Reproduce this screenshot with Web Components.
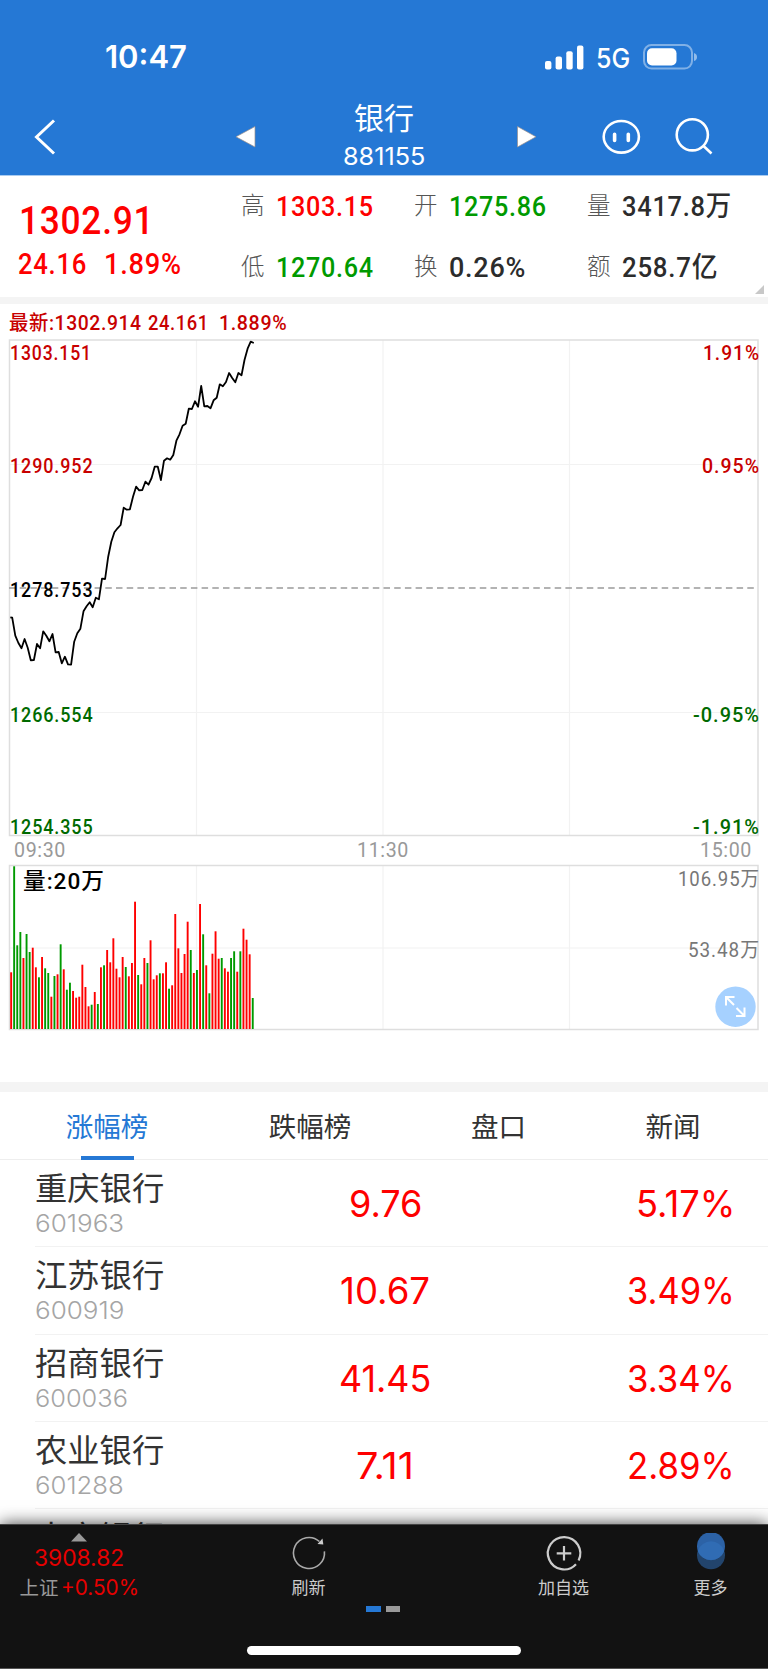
<!DOCTYPE html>
<html lang="zh-CN">
<head>
<meta charset="utf-8">
<meta name="viewport" content="width=device-width, initial-scale=1">
<title>银行 881155</title>
<style>
    body {
        margin: 0;
        background: #fff;
        font-family: Inter, "Noto Sans CJK SC", sans-serif;
        --brand: #2578d5;
        --up: #fe0000;
        --down: #009a00;
        --din: Roboto, "Noto Sans CJK SC", sans-serif;
    }
</style>
</head>
<body>
<stock-page></stock-page>

<script>
// Text squeezed or stretched to a fixed width
class FitText extends HTMLElement {
    constructor() {
        super();
        this.attachShadow({ mode: 'open' });
        this.shadowRoot.innerHTML = `
        <style>
        :host { display: block; white-space: nowrap; flex: none; }
        span { display: inline-block; transform-origin: 0 50%; }
        </style>
        <span><slot></slot></span>
        `;
    }

    connectedCallback() {
        const width = Number(this.getAttribute('width'));
        const span = this.shadowRoot.querySelector('span');
        this.style.width = width + 'px';
        span.style.transform = `scaleX(${width / span.offsetWidth})`;
    }
}
customElements.define('fit-text', FitText);

class StatusBar extends HTMLElement {
    constructor() {
        super();
        this.attachShadow({ mode: 'open' });
        this.shadowRoot.innerHTML = `
        <style>
        :host {
            display: flex;
            align-items: center;
            box-sizing: border-box;
            height: 98px;
            padding: 16px 71px 0 105px;
            background: var(--brand);
            color: #fff;
            line-height: 40px;
        }
        .time { font-size: 31px; font-weight: 600; margin-right: auto; }
        .net { font-size: 26.5px; font-weight: 500; margin: 2px 13px 0 12px; }
        svg { display: block; }
        </style>
        <fit-text class="time" width="82">10:47</fit-text>
        <svg width="39" height="25" fill="#fff">
            <rect x="0" y="16" width="6.4" height="8.6" rx="2"/>
            <rect x="10.6" y="11.5" width="6.4" height="13.1" rx="2"/>
            <rect x="21.3" y="6.3" width="6.4" height="18.3" rx="2"/>
            <rect x="32" y="0.5" width="6.4" height="24.1" rx="2"/>
        </svg>
        <fit-text class="net" width="34">5G</fit-text>
        <svg width="54" height="26" fill="none">
            <rect x="1" y="1" width="48" height="23.6" rx="7.5" stroke="#fff" stroke-opacity=".42" stroke-width="2"/>
            <rect x="4" y="4.2" width="29.5" height="17.2" rx="5" fill="#fff"/>
            <path d="M51 9 Q54 10 54 13 T51 17 Z" fill="#fff" fill-opacity=".5"/>
        </svg>
        `;
    }
}
customElements.define('status-bar', StatusBar);

class NavBar extends HTMLElement {
    constructor() {
        super();
        this.attachShadow({ mode: 'open' });
        this.shadowRoot.innerHTML = `
        <style>
        :host {
            display: grid;
            grid-template-columns: 234px 109px 172px 86px 73px 1fr;
            align-items: center;
            box-sizing: border-box;
            height: 78px;
            border-bottom: 1px solid #a9cbf0;
            background: var(--brand);
            color: #fff;
        }
        svg { display: block; fill: none; stroke: #fff; }
        .back { margin-left: 33px; }
        .tri { fill: #fff; stroke: #9a8f8c; stroke-width: .7; }
        .title { width: 82px; text-align: center; }
        .name { font-size: 30px; line-height: 40px; }
        .code { font-size: 24px; line-height: 37px; margin-left: -1.5px; }
        </style>
        <svg class="back" width="26" height="38" stroke-width="3"><path d="M21 2.500 L3.500 19 L21 35.500"/></svg>
        <svg class="tri" width="24" height="24"><path d="M21 1.500 V22 L2 11.800 Z"/></svg>
        <div class="title">
            <div class="name"><slot name="name"></slot></div>
            <fit-text class="code" width="82"><slot name="code"></slot></fit-text>
        </div>
        <svg class="tri" width="24" height="24"><path d="M2.500 1.500 V22 L21 11.800 Z"/></svg>
        <svg width="40" height="38" stroke-width="2.600">
            <ellipse cx="20.300" cy="18.800" rx="17.600" ry="15.800"/>
            <path d="M13.600 16.300 V22.500 M27.300 16.300 V22.500" stroke-width="3.600" stroke-linecap="round"/>
        </svg>
        <svg width="42" height="40" stroke-width="2.600">
            <circle cx="18.300" cy="17.800" r="15.600"/>
            <path d="M29 28.500 L37.500 36.500"/>
        </svg>
        `;
    }
}
customElements.define('nav-bar', NavBar);

class QuoteSummary extends HTMLElement {
    constructor() {
        super();
        this.attachShadow({ mode: 'open' });
        this.shadowRoot.innerHTML = `
        <style>
        :host {
            display: grid;
            grid-template-columns: 241px 1fr;
            position: relative;
            height: 121px;
            font-family: var(--din);
            font-weight: 500;
            letter-spacing: .05em;
        }
        .last { padding: 22px 0 0 19px; color: var(--up); }
        .price { font-size: 39.5px; line-height: 45px; }
        .diff { display: flex; gap: 17px; margin-left: -1px; font-size: 29px; line-height: 43px; }
        .grid { display: grid; grid-template-columns: repeat(3, 173px); grid-auto-rows: 61px; }
        .cell { display: flex; gap: 11.5px; font-size: 28px; line-height: 61px; color: #2c2c2c; }
        .cell i { font-style: normal; font-weight: 300; font-size: 23.5px; letter-spacing: 0; color: #555; }
        .up { color: var(--up); }
        .down { color: var(--down); }
        .corner { position: absolute; right: 4px; bottom: 3px; }
        </style>
        <div class="last">
            <fit-text class="price" width="135">1302.91</fit-text>
            <div class="diff"><fit-text width="69">24.16</fit-text><fit-text width="78">1.89%</fit-text></div>
        </div>
        <div class="grid">
            <div class="cell"><i>高</i><fit-text class="up" width="98">1303.15</fit-text></div>
            <div class="cell"><i>开</i><fit-text class="down" width="98">1275.86</fit-text></div>
            <div class="cell"><i>量</i><fit-text width="110">3417.8万</fit-text></div>
            <div class="cell"><i>低</i><fit-text class="down" width="98">1270.64</fit-text></div>
            <div class="cell"><i>换</i><fit-text width="77">0.26%</fit-text></div>
            <div class="cell"><i>额</i><fit-text width="96">258.7亿</fit-text></div>
        </div>
        <svg class="corner" width="9" height="9"><path d="M9 0 V9 H0 Z" fill="#c8c8c8"/></svg>
        `;
    }
}
customElements.define('quote-summary', QuoteSummary);

// Intraday price line, one point per minute
const PRICE_LEFT = 12.2;
const PRICE_STEP = 3.098;
const prices = [
    617.7, 635.7, 643, 648.3, 639, 647.7, 660.3, 660, 644, 648.3, 631.3, 635.7, 641.3, 634, 652.3, 652,
    663.3, 656.7, 664.3, 664.7, 641.7, 633.3, 628.7, 611.3, 606.3, 602.3, 607.3, 597.7, 599.3, 578.7, 579,
    556.7, 541.7, 532.3, 528.3, 525, 507.7, 509.7, 509.3, 496.7, 486.7, 490.3, 490, 481.7, 484.7, 478, 466.7,
    466.7, 480, 460.7, 458.3, 459.7, 455, 440.7, 434.3, 425.7, 423.7, 408.7, 409, 401.3, 406.7, 386, 406.3,
    406, 408.3, 400.3, 397.7, 384.3, 386.3, 382, 373, 378, 382.3, 373, 375.3, 360, 348.7, 341.7, 343
];

class PriceChart extends HTMLElement {
    constructor() {
        super();
        this.attachShadow({ mode: 'open' });
        const points = prices.map((y, i) => `${(PRICE_LEFT + i * PRICE_STEP).toFixed(1)},${y}`).join(' ');
        this.shadowRoot.innerHTML = `
        <style>
        :host { display: block; height: 500px; }
        svg { display: block; }
        text { font: 500 20px var(--din); letter-spacing: 1px; }
        .right text { text-anchor: end; }
        .up { fill: #c80000; }
        .down { fill: #006a00; }
        </style>
        <svg width="768" height="500" viewBox="0 338 768 500">
            <path d="M10 464.500 H758 M10 712.500 H758 M196.500 340 V835 M383 340 V835 M569.500 340 V835" stroke="#f2f2f2" stroke-width="1.200"/>
            <rect x="9.500" y="340" width="748.500" height="495.500" fill="none" stroke="#dedede" stroke-width="1.500"/>
            <path d="M9 588 H758" stroke="#9a9a9a" stroke-width="1.700" stroke-dasharray="6.500 4.200"/>
            <polyline points="10.3,617.3 ${points}" fill="none" stroke="#000" stroke-width="1.800" stroke-linejoin="round"/>
            <text class="up" x="10" y="360" textLength="82" lengthAdjust="spacingAndGlyphs">1303.151</text>
            <text class="up" x="10" y="473" textLength="83.500" lengthAdjust="spacingAndGlyphs">1290.952</text>
            <text x="10" y="597" textLength="83.500" lengthAdjust="spacingAndGlyphs">1278.753</text>
            <text class="down" x="10" y="721.500" textLength="83.500" lengthAdjust="spacingAndGlyphs">1266.554</text>
            <text class="down" x="10" y="833.500" textLength="83.500" lengthAdjust="spacingAndGlyphs">1254.355</text>
            <g class="right">
                <text class="up" x="760" y="360" textLength="57" lengthAdjust="spacingAndGlyphs">1.91%</text>
                <text class="up" x="760" y="473" textLength="58" lengthAdjust="spacingAndGlyphs">0.95%</text>
                <text class="down" x="760" y="721.500" textLength="67" lengthAdjust="spacingAndGlyphs">-0.95%</text>
                <text class="down" x="760" y="833.500" textLength="67" lengthAdjust="spacingAndGlyphs">-1.91%</text>
            </g>
        </svg>
        `;
    }
}
customElements.define('price-chart', PriceChart);

// Bar heights in thirds of a pixel, one bar per minute
const volumes = [
    170, 488, 251, 291, 213, 285, 231, 244, 185, 155, 216, 182, 168, 97, 159, 164, 254, 179, 118, 139,
    114, 94, 97, 193, 126, 68, 73, 111, 75, 185, 191, 237, 200, 272, 181, 155, 216, 186, 158, 198,
    382, 162, 134, 213, 198, 266, 149, 161, 167, 167, 200, 121, 131, 345, 242, 168, 225, 322, 237, 168,
    177, 375, 284, 191, 107, 226, 293, 211, 213, 182, 172, 213, 233, 172, 233, 301, 268, 224, 93
];
// r: price rose in that minute, g: price fell
const volumeColors = 'rgggrggrrgrggrgrgrggrrrrrrgrgrgrrrrrrgrrrgrrgrrrgrrgrrrrrrgrgrgrgrrrgrrggrgrrrg';

class VolumeChart extends HTMLElement {
    constructor() {
        super();
        this.attachShadow({ mode: 'open' });
        const bars = volumes.map((v, i) => {
            const x = (11.1 + i * 3.098 - 0.95).toFixed(1);
            const h = v / 3;
            return `<rect x="${x}" y="${(1029 - h).toFixed(1)}" width="1.9" height="${h.toFixed(1)}" fill="${volumeColors[i] === 'g' ? '#009a00' : '#fe0000'}"/>`;
        }).join('');
        this.shadowRoot.innerHTML = `
        <style>
        :host { display: block; position: relative; height: 220px; }
        svg { display: block; }
        text { font: 400 20px var(--din); letter-spacing: 1px; fill: #777; }
        .total { font-size: 22.5px; font-weight: 500; fill: #000; }
        .expand { position: absolute; left: 715px; top: 124px; }
        </style>
        <svg width="768" height="170" viewBox="0 862 768 170">
            <path d="M10 948 H758 M196.500 866 V1029 M383 866 V1029 M569.500 866 V1029" stroke="#f2f2f2" stroke-width="1.200"/>
            <rect x="9.500" y="865.500" width="748.500" height="164" fill="none" stroke="#dedede" stroke-width="1.500"/>
            ${bars}
            <text class="total" x="23" y="889" textLength="82" lengthAdjust="spacingAndGlyphs">量:20万</text>
            <text x="760" y="886" text-anchor="end" textLength="82" lengthAdjust="spacingAndGlyphs">106.95万</text>
            <text x="760" y="956.500" text-anchor="end" textLength="72" lengthAdjust="spacingAndGlyphs">53.48万</text>
        </svg>
        <svg class="expand" width="41" height="41" fill="none" stroke="#fff" stroke-width="2">
            <circle cx="20.500" cy="20.700" r="20.200" fill="#a6d1ff" stroke="none"/>
            <path d="M11 19.500 V11 H19.500 M11 11 L19 19 M29.500 21.500 V30 H21 M29.500 30 L21.500 22"/>
        </svg>
        `;
    }
}
customElements.define('volume-chart', VolumeChart);

class ChartPanel extends HTMLElement {
    constructor() {
        super();
        this.attachShadow({ mode: 'open' });
        this.shadowRoot.innerHTML = `
        <style>
        :host { display: block; border-top: 7px solid #f4f4f4; font-family: var(--din); letter-spacing: .04em; }
        .info {
            display: flex;
            height: 34px;
            padding-left: 9px;
            font-size: 20.5px;
            font-weight: 500;
            line-height: 39px;
            color: #c80000;
        }
        .info fit-text + fit-text { margin-left: 6px; }
        .axis {
            display: flex;
            justify-content: space-between;
            height: 24px;
            padding: 0 16px 0 14px;
            font-size: 20px;
            line-height: 25.5px;
            color: #999;
        }
        </style>
        <div class="info">
            <fit-text width="133">最新:1302.914</fit-text>
            <fit-text width="61">24.161</fit-text>
            <fit-text width="68" style="margin-left: 10px">1.889%</fit-text>
        </div>
        <price-chart></price-chart>
        <div class="axis">
            <fit-text width="52">09:30</fit-text>
            <fit-text width="52">11:30</fit-text>
            <fit-text width="52">15:00</fit-text>
        </div>
        <volume-chart></volume-chart>
        `;
    }
}
customElements.define('chart-panel', ChartPanel);

class RankTabs extends HTMLElement {
    constructor() {
        super();
        this.attachShadow({ mode: 'open' });
        this.shadowRoot.innerHTML = `
        <style>
        :host {
            display: grid;
            grid-template-columns: 214px 192px 185px 164px;
            box-sizing: border-box;
            height: 78px;
            border-top: 10px solid #f4f4f4;
            border-bottom: 1px solid #eee;
            font-size: 27.5px;
            line-height: 70px;
            color: #333;
        }
        div { display: flex; flex-direction: column; align-items: center; }
        .active { color: var(--brand); }
        .active::after {
            content: "";
            width: 53px;
            height: 4px;
            margin-top: -6px;
            background: var(--brand);
        }
        </style>
        <div class="active">涨幅榜</div>
        <div>跌幅榜</div>
        <div>盘口</div>
        <div>新闻</div>
        `;
    }
}
customElements.define('rank-tabs', RankTabs);

class StockRow extends HTMLElement {
    constructor() {
        super();
        this.attachShadow({ mode: 'open' });
    }

    // Text of one attribute, fitted to the matching -width attribute
    fitted(name) {
        if (!this.hasAttribute(name)) {
            return '';
        }
        return `<fit-text class="${name}" width="${this.getAttribute(name + '-width')}">${this.getAttribute(name)}</fit-text>`;
    }

    connectedCallback() {
        this.shadowRoot.innerHTML = `
        <style>
        :host {
            display: grid;
            grid-template-columns: 1fr 98px 1fr;
            box-sizing: border-box;
            height: 87.25px;
            margin-left: 35px;
            padding-right: 33px;
            border-bottom: 1px solid #f2f2f2;
        }
        .title { padding-top: 7px; }
        .name { font-size: 32.3px; line-height: 44px; color: #333; }
        .code { font-size: 24px; font-weight: 300; line-height: 26px; color: #a5a5a5; }
        .mid, .end { display: flex; font-size: 37px; line-height: 88px; color: var(--up); }
        .mid { justify-content: center; }
        .end { justify-content: flex-end; }
        </style>
        <div class="title">
            <div class="name">${this.getAttribute('name')}</div>
            ${this.fitted('code')}
        </div>
        <div class="mid">${this.fitted('price')}</div>
        <div class="end">${this.fitted('change')}</div>
        `;
    }
}
customElements.define('stock-row', StockRow);

class TabButton extends HTMLElement {
    constructor() {
        super();
        this.attachShadow({ mode: 'open' });
        this.shadowRoot.innerHTML = `
        <style>
        :host {
            display: flex;
            flex-direction: column;
            align-items: center;
            padding-top: 8px;
            font-size: 17px;
            line-height: 24px;
            color: #ccc;
        }
        ::slotted(svg) { display: block; margin-bottom: 2px; }
        </style>
        <slot name="icon"></slot>
        <span><slot></slot></span>
        `;
    }
}
customElements.define('tab-button', TabButton);

class BottomBar extends HTMLElement {
    constructor() {
        super();
        this.attachShadow({ mode: 'open' });
        this.shadowRoot.innerHTML = `
        <style>
        :host {
            display: block;
            position: relative;
            box-sizing: border-box;
            height: 145px;
            border-top: 1px solid #444;
            border-bottom: 1px solid #555;
            background: #121212;
            box-shadow: 0 0 16px rgba(0, 0, 0, .75);
        }
        .items { display: grid; grid-template-columns: 158px 301px 209px 85px; height: 81px; }
        .index { display: flex; flex-direction: column; align-items: center; padding-top: 8px; color: #e60000; }
        .index svg { display: block; }
        .value { font-size: 22.5px; line-height: 32px; }
        .change { display: flex; gap: 2px; font-size: 21px; line-height: 28px; }
        .change span { color: #999; font-size: 19.5px; }
        .dots { display: flex; justify-content: center; gap: 5px; margin-right: 1.500px; }
        .dots i { width: 14.500px; height: 6px; background: #999; }
        .dots i:first-child { background: var(--brand); }
        .home { width: 274px; height: 9px; margin: 33.500px auto 0; border-radius: 5px; background: #fff; }
        </style>
        <div class="items">
            <div class="index">
                <svg width="16" height="9"><path d="M8 0 L16 8.500 H0 Z" fill="#999"/></svg>
                <fit-text class="value" width="90">3908.82</fit-text>
                <div class="change"><span>上证</span><fit-text width="78">+0.50%</fit-text></div>
            </div>
            <tab-button>
                <svg slot="icon" width="40" height="41" fill="none" stroke="#aaa" stroke-width="1.600">
                    <path d="M35.400 18.300 A15.500 15.500 0 1 1 30.400 8.500"/>
                    <path d="M33.500 5.500 L34.300 11.500 L28.500 11 Z" fill="#ccc" stroke="none"/>
                </svg>刷新
            </tab-button>
            <tab-button>
                <svg slot="icon" width="40" height="41" fill="none" stroke="#ccc" stroke-width="2.200">
                    <path d="M34.600 27.400 A16.200 16.200 0 1 0 32 31.200"/>
                    <path d="M12.700 20.300 H27.300 M20 13 V27.600"/>
                </svg>加自选
            </tab-button>
            <tab-button>
                <svg slot="icon" width="40" height="41">
                    <circle cx="20" cy="22.300" r="14" fill="#22446c"/>
                    <circle cx="20" cy="13.200" r="14" fill="#2c62a6"/>
                    <path d="M6.800 17.700 A14 14 0 0 1 33.200 17.700 A14 14 0 0 1 6.800 17.700 Z" fill="#306cb4"/>
                </svg>更多
            </tab-button>
        </div>
        <div class="dots"><i></i><i></i></div>
        <div class="home"></div>
        `;
    }
}
customElements.define('bottom-bar', BottomBar);

class StockPage extends HTMLElement {
    constructor() {
        super();
        this.attachShadow({ mode: 'open' });
        this.shadowRoot.innerHTML = `
        <style>
        :host { display: block; width: 768px; height: 1669px; overflow: hidden; }
        .list { height: 364px; overflow: hidden; }
        </style>
        <status-bar></status-bar>
        <nav-bar><span slot="name">银行</span><span slot="code">881155</span></nav-bar>
        <quote-summary></quote-summary>
        <chart-panel></chart-panel>
        <rank-tabs></rank-tabs>
        <div class="list">
            <stock-row name="重庆银行" code="601963" code-width="89" price="9.76" price-width="73" change="5.17%" change-width="99"></stock-row>
            <stock-row name="江苏银行" code="600919" code-width="89" price="10.67" price-width="90" change="3.49%" change-width="108"></stock-row>
            <stock-row name="招商银行" code="600036" code-width="93" price="41.45" price-width="92" change="3.34%" change-width="108"></stock-row>
            <stock-row name="农业银行" code="601288" code-width="89" price="7.11" price-width="58" change="2.89%" change-width="108"></stock-row>
            <stock-row name="南京银行"></stock-row>
        </div>
        <bottom-bar></bottom-bar>
        `;
    }
}
customElements.define('stock-page', StockPage);
</script>
</body>
</html>
